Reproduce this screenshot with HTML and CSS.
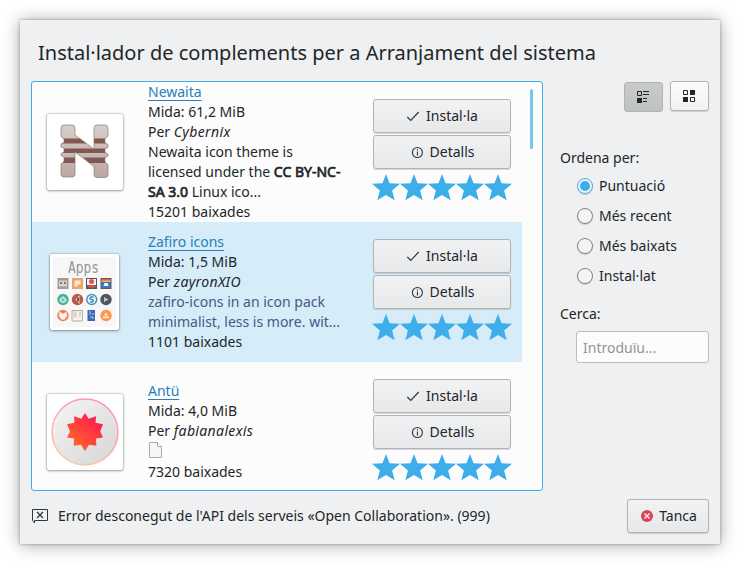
FILE: index.html
```html
<!DOCTYPE html>
<html>
<head>
<meta charset="utf-8">
<title>Instal·lador de complements</title>
<link rel="stylesheet" href="styles.css">
</head>
<body>
<svg class="defs" width="0" height="0" aria-hidden="true">
  <defs>
    <symbol id="stars" viewBox="0 0 140 28">
      <g fill="#3daee9">
        <path id="star" d="M14 1 17.600 10.200 28 10.800 20.100 17.500 22.700 27.200 14 22.100 5.300 27.200 7.900 17.500 0 10.800l10.400-.6z"/>
        <use href="#star" x="28"/><use href="#star" x="56"/><use href="#star" x="84"/><use href="#star" x="112"/>
      </g>
    </symbol>
    <symbol id="check" viewBox="0 0 16 16"><path d="M2.3 9 5.8 12.5 13.7 4" fill="none" stroke="#31363b" stroke-width="1.2"/></symbol>
    <symbol id="info" viewBox="0 0 16 16"><circle cx="8.4" cy="8.5" r="5" fill="none" stroke="#31363b" stroke-width="1.1"/><path d="M7.9 5.2h1v1.2h-1zM7.9 7.4h1v4.2h-1z" fill="#232629"/></symbol>
  </defs>
</svg>
<main class="window">
  <h1>Instal·lador de complements per a Arranjament del sistema</h1>
  <div class="content">
    <section class="list">
      <article class="row">
        <div class="preview">
          <svg class="thumb" width="76" height="76" viewBox="0 0 76 76">
            <defs>
              <linearGradient id="bone" x1="0" y1="0" x2="0" y2="1"><stop offset="0" stop-color="#d9cfcb"/><stop offset="1" stop-color="#b9a8a1"/></linearGradient>
              <clipPath id="nclip"><path id="nshape" d="M17 11h8q3 0 3 3v7l19 14V14q0-3 3-3h8q3 0 3 3v8l-3 2.500v4.500l3 1.500v3l-3 1v4l3 1.500v2l-3 1.500v4.500l3 2.500v10q0 3-3 3h-8q-3 0-3-3v-8L28 38v22q0 3-3 3h-8q-3 0-3-3V50l3-2.500V43l-3-1.500v-2l3-1.500v-4l-3-1v-3l3-1.500V25l-3-2.500V14q0-3 3-3z"/></clipPath>
            </defs>
            <g clip-path="url(#nclip)">
              <path d="M13 10h49v54H13z" fill="url(#bone)"/>
              <path d="M13 24.500h22l5 5H13zM47 24.500h15v5H47zM13 34.500h49V39H13zM13 43.500h15V49H13zM36 43.500h26V49H42z" fill="#80584e"/>
            </g>
            <use href="#nshape" fill="none" stroke="#8a7b75" stroke-width=".7"/>
          </svg>
        </div>
        <div class="info">
          <p><a>Newaita</a></p><p>Mida: 61,2 MiB</p><p>Per <i>Cybernix</i></p>
          <p>Newaita icon theme is</p><p>licensed under the <b>CC BY-NC-</b></p><p><b>SA 3.0</b> Linux ico...</p><p>15201 baixades</p>
        </div>
        <div class="actions">
          <button><svg width="16" height="16"><use href="#check"/></svg><span>Instal·la</span></button>
          <button class="details"><svg width="16" height="16"><use href="#info"/></svg><span>Detalls</span></button>
          <svg class="stars" width="140" height="28"><use href="#stars"/></svg>
        </div>
      </article>
      <article class="row selected">
        <div class="preview narrow">
          <svg class="thumb" width="69" height="76" viewBox="1 1 69 76">
            <path d="M4 4h63v70H4z" fill="#f7f7f7"/>
            <text class="apps" x="19" y="19.500" textLength="31" lengthAdjust="spacingAndGlyphs">Apps</text>
            <g fill="#a39a91"><path d="M8.500 25h11v11h-11z"/></g>
            <path d="M10 27.500h8v6h-8z" fill="#d9d2ca"/><path d="M11 29h2v2h-2zM15 29h2v2h-2z" fill="#80766d"/>
            <path d="M23 25h11v11H23z" fill="#eba767"/><path d="M25.500 27.500h6v4h-3v2h-3z" fill="#fbe9d7"/>
            <path d="M37 25h11v11H37z" fill="#505762"/><path d="M38 26h9v6h-9z" fill="#f7f2f1"/><circle cx="42.500" cy="28.500" r="2.500" fill="#e94e49"/><path d="M38.500 32.500h8v2h-8z" fill="#e94e49"/>
            <path d="M51.500 25h11v11h-11z" fill="#685361"/><path d="M52.500 26h9v2h-9z" fill="#e26050"/><path d="M52.500 27.500h9v2h-9z" fill="#e8ba4d"/><path d="M52.500 29h9v6h-9z" fill="#3b77c4"/><path d="M55.500 30h3l1 3h-5z" fill="#fff"/>
            <circle cx="14" cy="46.500" r="5.700" fill="#4aae98"/><path d="M10.500 46 14 43l3.500 3v2.500l-3.500 2-3.500-2z" fill="#b7e3d7"/><circle cx="14" cy="47" r="1" fill="#4aae98"/>
            <circle cx="28.500" cy="46.500" r="5.700" fill="#b7594d"/><path d="m30.500 42-4 4.500 4 4.500z" fill="#f5deda"/><path d="M28 44.500h2v4h-2z" fill="#904238"/>
            <circle cx="42.700" cy="46.500" r="5.700" fill="#4e94b7"/><circle cx="42.700" cy="46.500" r="4.200" fill="#eef7fb"/><path d="M44.500 44h-2.500q-2.500 2 .5 2.500t1 2.500h-2.500" fill="none" stroke="#338bbd" stroke-width="1.400"/>
            <circle cx="57" cy="46.500" r="5.700" fill="#4f555b"/><path d="m55 44 4.500 2.500L55 49z" fill="#bcc4ca"/>
            <circle cx="14" cy="62.500" r="5.700" fill="#f77b5d"/><path d="m10.500 59 2.500 1 1 1 1-1 2.500-1 .5 4-2.500 3.500h-3L10 63z" fill="#fff5ef"/>
            <path d="M23 57.500h10.500v10.500H23z" fill="#f5f1eb" stroke="#b9aba0"/><path d="M24.500 58.500h3v6h-3zM30 58.500h2v5h-2z" fill="#d8d1ca"/>
            <path d="M38.500 57h7.500v11h-7.500z" fill="#3869b1"/><path d="M41 58v4M44 60v2M41 64h3v2" stroke="#b6d4f4" fill="none"/>
            <circle cx="57" cy="62.500" r="5.700" fill="#fc974b"/><path d="m57 59.500 2 3h-4zM54 63.500h6v1.500h-6z" fill="#fff0df"/>
          </svg>
        </div>
        <div class="info">
          <p><a>Zafiro icons</a></p><p>Mida: 1,5 MiB</p><p>Per <i>zayronXIO</i></p>
          <p class="summary">zafiro-icons in an icon pack</p><p class="summary">minimalist, less is more. wit...</p><p>1101 baixades</p>
        </div>
        <div class="actions">
          <button><svg width="16" height="16"><use href="#check"/></svg><span>Instal·la</span></button>
          <button class="details"><svg width="16" height="16"><use href="#info"/></svg><span>Detalls</span></button>
          <svg class="stars" width="140" height="28"><use href="#stars"/></svg>
        </div>
      </article>
      <article class="row">
        <div class="preview">
          <svg class="thumb" width="76" height="76" viewBox="0 0 76 76">
            <defs>
              <linearGradient id="disc" x1="0" y1="0" x2="1" y2="1"><stop offset="0" stop-color="#f6f6f6"/><stop offset="1" stop-color="#d5d5d5"/></linearGradient>
              <linearGradient id="ring" x1="0" y1="1" x2=".5" y2="0"><stop offset="0" stop-color="#ffd09c"/><stop offset="1" stop-color="#ff94b4"/></linearGradient>
              <linearGradient id="burst" x1="0" y1="1" x2=".8" y2="0"><stop offset="0" stop-color="#ff7620"/><stop offset="1" stop-color="#ff1655"/></linearGradient>
            </defs>
            <circle cx="38" cy="38" r="33" fill="url(#disc)" stroke="url(#ring)" stroke-width="1.500"/>
            <path d="M38 19l3.700 5.800L49 22.300l-.4 6.500 7.400 1.500-2.800 7.200 2.800 6-7 1 .3 7.200-7.300-1-4 6.500-4-6.500-7.300 1 .3-7.200-7-1 3-6-3-7.200 7.400-1.500-.4-6.500 7.300 2.500z" fill="url(#burst)"/>
          </svg>
        </div>
        <div class="info raised">
          <p><a>Antü</a></p><p>Mida: 4,0 MiB</p><p>Per <i>fabianalexis</i></p>
          <p class="picture"><svg width="16" height="18" viewBox="0 0 16 18"><path d="M1.500 1.500h8l4 4v11h-12z" fill="#f6f6f6" stroke="#aaa"/><path d="M9.500 1.500v4h4" fill="#fff" stroke="#aaa"/></svg></p>
          <p>7320 baixades</p>
        </div>
        <div class="actions">
          <button><svg width="16" height="16"><use href="#check"/></svg><span>Instal·la</span></button>
          <button class="details"><svg width="16" height="16"><use href="#info"/></svg><span>Detalls</span></button>
          <svg class="stars" width="140" height="28"><use href="#stars"/></svg>
        </div>
      </article>
      <div class="scrollbar"></div>
    </section>
    <aside class="sidebar">
      <div class="modes">
        <button class="mode pressed"><svg width="16" height="16" viewBox="0 0 16 16"><path d="M2.500 2.500h4v4h-4z" fill="none" stroke="#232629"/><path d="M2 9h5v5H2zM8 2h6v1H8zM8 5h6v1H8zM8 9h4v1H8zM8 12h4v1H8z" fill="#232629"/></svg></button>
        <button class="mode"><svg width="16" height="16" viewBox="0 0 16 16"><path d="M2.500 2.500h4v4h-4zM9.500 9.500h4v4h-4z" fill="none" stroke="#232629"/><path d="M9 2h5v5H9zM2 9h5v5H2z" fill="#232629"/></svg></button>
      </div>
      <div class="label">Ordena per:</div>
      <div class="options">
        <label><span class="radio checked"></span><span>Puntuació</span></label>
        <label><span class="radio"></span><span>Més recent</span></label>
        <label><span class="radio"></span><span>Més baixats</span></label>
        <label><span class="radio"></span><span>Instal·lat</span></label>
      </div>
      <div class="label search-label">Cerca:</div>
      <input class="search" placeholder="Introduïu...">
    </aside>
  </div>
  <footer>
    <svg width="16" height="16" viewBox="0 0 16 16"><path d="M.5 1.500h15v11H2.500v2.500L.5 12.500z" fill="none" stroke="#31363b"/><path d="m5 4 6 6M11 4l-6 6" stroke="#31363b" stroke-width="1.300"/></svg>
    <span class="message">Error desconegut de l'API dels serveis «Open Collaboration». (999)</span>
    <button class="close"><svg width="16" height="16" viewBox="0 0 16 16"><circle cx="8" cy="8" r="6" fill="#da4453"/><path d="m5.500 5.500 5 5M10.500 5.500l-5 5" stroke="#fcfcfc" stroke-width="1.200"/></svg><span>Tanca</span></button>
  </footer>
</main>
</body>
</html>
```
FILE: styles.css
```css
* { box-sizing: border-box; }
body {
  margin: 0;
  padding: 20px;
  height: 564px;
  background: #fff;
  overflow: hidden;
  font: 14px/20px "Noto Sans", sans-serif;
  color: #232629;
}
p, h1 { margin: 0; }
svg { display: block; flex: none; }
.defs { position: absolute; }
.window {
  display: flex;
  flex-direction: column;
  width: 700px;
  height: 524px;
  padding: 18px 11px 11px;
  background: #eff0f1;
  box-shadow: 0 0 3px rgba(0,0,0,.3), 0 1px 16px rgba(0,0,0,.35);
}
h1 { padding-left: 7px; font-size: 20px; font-weight: 400; line-height: 30px; white-space: nowrap; }
.content { display: flex; margin-top: 13px; gap: 17px; }
.list {
  position: relative;
  width: 512px;
  height: 410px;
  border: 1px solid #3daee9;
  border-radius: 3px;
  background: #fcfcfc;
  overflow: hidden;
}
.row { display: grid; grid-template-columns: 116px 224px 140px; align-items: center; width: 490px; height: 140px; }
.selected { background: #d6ecf8; }
.preview { display: flex; justify-content: center; padding-right: 10px; }
.narrow { padding-right: 11px; }
.thumb { background: #fff; border-radius: 2px; box-shadow: 0 0 2px rgba(0,0,0,.4), 0 1px 3px rgba(0,0,0,.3); }
.apps { font: 16px "DejaVu Sans Mono", monospace; fill: #969696; }
.info { white-space: nowrap; }
.raised { padding-bottom: 2px; }
.info a { color: #2980b9; text-decoration: underline; text-underline-offset: 3px; text-decoration-thickness: 1px; }
.info b { font-weight: 400; -webkit-text-stroke: .7px #232629; }
.info i { letter-spacing: .35px; }
.summary { color: #475987; }
.picture { height: 21px; }
.actions { display: flex; flex-direction: column; gap: 2px; padding-bottom: 4px; }
button {
  display: flex;
  align-items: center;
  justify-content: center;
  gap: 5px;
  width: 138px;
  height: 34px;
  margin: 0 0 0 1px;
  padding: 0 1px 0 0;
  border: 1px solid #b2b4b6;
  border-radius: 3px;
  background: linear-gradient(#f1f2f3, #e7e8ea);
  box-shadow: 0 1px 1px rgba(0,0,0,.15);
  color: #232629;
  font: inherit;
}
.stars { margin-top: 2px; }
.scrollbar { position: absolute; top: 7px; right: 9px; width: 3px; height: 60px; border-radius: 2px; background: #76c6ef; }
.sidebar { flex: 1; }
.modes { display: flex; justify-content: flex-end; gap: 7px; }
.mode { width: 39px; height: 30px; margin: 0; padding: 0 1px 0 0; background: linear-gradient(#fcfcfc, #f1f2f3); }
.pressed { margin-top: 1px; background: linear-gradient(#c9cacb, #c0c1c3); border-color: #b0b2b4; box-shadow: none; }
.label { margin-top: 36px; }
.options { margin: 3px 0 0 17px; }
.options label { display: flex; align-items: center; gap: 6px; height: 30px; }
.radio { display: grid; place-items: center; width: 16px; height: 16px; border: 1px solid #828587; border-radius: 50%; background: #f3f4f5; box-shadow: 0 1px 1px rgba(0,0,0,.15); }
.checked { border-color: #3daee9; }
.checked::after { content: ""; width: 10px; height: 10px; border-radius: 50%; background: #3daee9; }
.search-label { margin-top: 13px; }
.search { display: block; width: 133px; height: 32px; margin: 7px 0 0 16px; padding: 0 6px; border: 1px solid #bcbebf; border-radius: 3px; background: #fcfcfc; font: inherit; color: #232629; }
.search::placeholder { color: #929495; opacity: 1; }
footer { display: flex; align-items: center; margin-top: 8px; padding-left: 1px; }
.message { margin-left: 10px; white-space: nowrap; }
.close { width: 82px; margin-left: auto; padding: 0; gap: 4px; }
```
